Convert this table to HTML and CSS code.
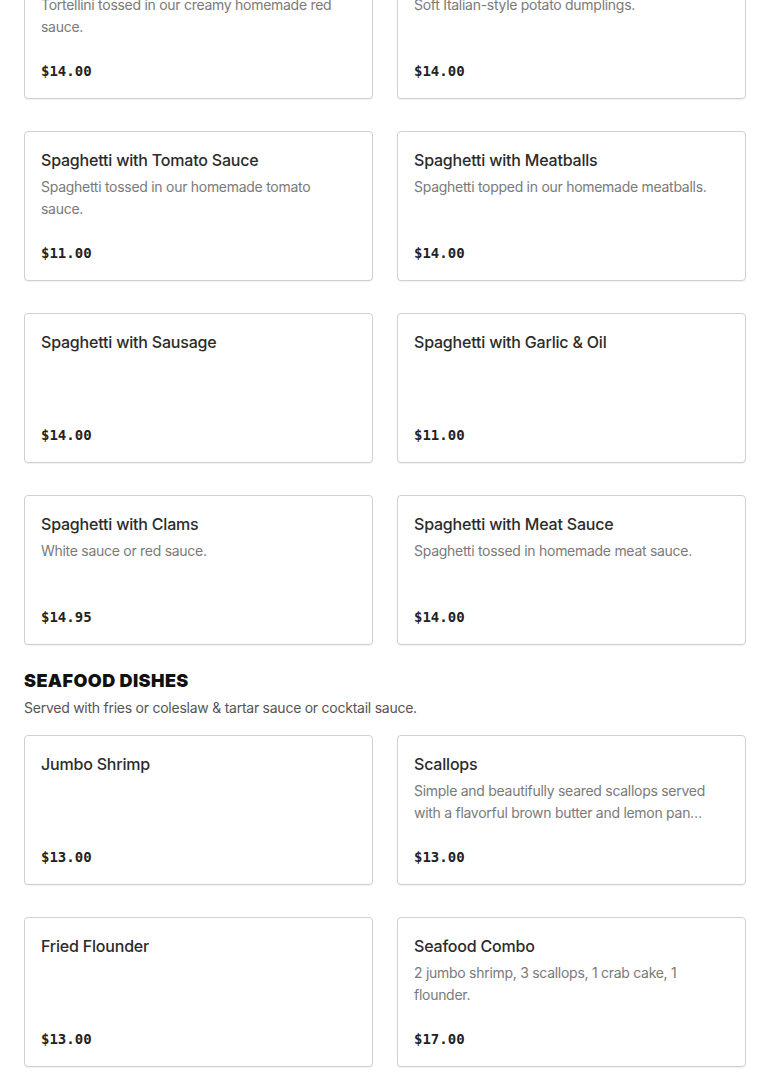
FILE: index.html
```html
<!DOCTYPE html>
<html>
<head>
<meta charset="utf-8">
<link rel="stylesheet" href="styles.css">
</head>
<body>
<main class="menu">
  <section class="section first">
    <div class="grid">
      <div class="card">
        <div class="title">Tortellini with Red Sauce</div>
        <div class="desc">Tortellini tossed in our creamy homemade red sauce.</div>
        <div class="price">$14.00</div>
      </div>
      <div class="card">
        <div class="title">Gnocchi</div>
        <div class="desc">Soft Italian-style potato dumplings.</div>
        <div class="price">$14.00</div>
      </div>
      <div class="card">
        <div class="title">Spaghetti with Tomato Sauce</div>
        <div class="desc">Spaghetti tossed in our homemade tomato sauce.</div>
        <div class="price">$11.00</div>
      </div>
      <div class="card">
        <div class="title">Spaghetti with Meatballs</div>
        <div class="desc">Spaghetti topped in our homemade meatballs.</div>
        <div class="price">$14.00</div>
      </div>
      <div class="card">
        <div class="title">Spaghetti with Sausage</div>
        <div class="price">$14.00</div>
      </div>
      <div class="card">
        <div class="title">Spaghetti with Garlic &amp; Oil</div>
        <div class="price">$11.00</div>
      </div>
      <div class="card">
        <div class="title">Spaghetti with Clams</div>
        <div class="desc">White sauce or red sauce.</div>
        <div class="price">$14.95</div>
      </div>
      <div class="card">
        <div class="title">Spaghetti with Meat Sauce</div>
        <div class="desc">Spaghetti tossed in homemade meat sauce.</div>
        <div class="price">$14.00</div>
      </div>
    </div>
  </section>
  <section class="section">
    <h2 class="heading">SEAFOOD DISHES</h2>
    <p class="subtitle">Served with fries or coleslaw &amp; tartar sauce or cocktail sauce.</p>
    <div class="grid">
      <div class="card">
        <div class="title">Jumbo Shrimp</div>
        <div class="price">$13.00</div>
      </div>
      <div class="card">
        <div class="title">Scallops</div>
        <div class="desc">Simple and beautifully seared scallops served with a flavorful brown butter and lemon pan…</div>
        <div class="price">$13.00</div>
      </div>
      <div class="card">
        <div class="title">Fried Flounder</div>
        <div class="price">$13.00</div>
      </div>
      <div class="card">
        <div class="title">Seafood Combo</div>
        <div class="desc">2 jumbo shrimp, 3 scallops, 1 crab cake, 1 flounder.</div>
        <div class="price">$17.00</div>
      </div>
    </div>
  </section>
</main>
</body>
</html>
```
FILE: styles.css
```css
html, body {
  margin: 0;
  padding: 0;
  background: #fff;
}
body {
  font-family: "Inter", "Liberation Sans", sans-serif;
  color: #2d2d2d;
}
.menu {
  padding: 0 24px;
  margin-top: -51px;
}
.section {
  margin-bottom: 24px;
}
.grid {
  display: grid;
  grid-template-columns: 1fr 1fr;
  column-gap: 24px;
  row-gap: 32px;
}
.card {
  box-sizing: border-box;
  height: 150px;
  border: 1px solid #d0d0d0;
  border-radius: 4px;
  box-shadow: 0 1px 1px rgba(0,0,0,0.06);
  padding: 16px;
  display: flex;
  flex-direction: column;
  background: #fff;
}
.title {
  font-size: 16px;
  line-height: 24px;
  font-weight: 500;
  color: #2b2b2b;
  letter-spacing: -0.2px;
}
.desc {
  margin-top: 4px;
  font-size: 14px;
  line-height: 22px;
  color: #7a7a7a;
  letter-spacing: -0.28px;
  padding-right: 8px;
  overflow: hidden;
  display: -webkit-box;
  -webkit-line-clamp: 2;
  -webkit-box-orient: vertical;
}
.price {
  margin-top: auto;
  margin-bottom: -1px;
  font-family: "DejaVu Sans Mono", "Liberation Mono", monospace;
  font-weight: bold;
  font-size: 14px;
  line-height: 24px;
  color: #222;
}
.heading {
  margin: 0;
  font-size: 18px;
  line-height: 24px;
  font-weight: 900;
  color: #111;
  letter-spacing: 0.4px;
}
.subtitle {
  margin: 4px 0 16px;
  font-size: 14px;
  line-height: 22px;
  color: #555;
  letter-spacing: -0.25px;
}
```
